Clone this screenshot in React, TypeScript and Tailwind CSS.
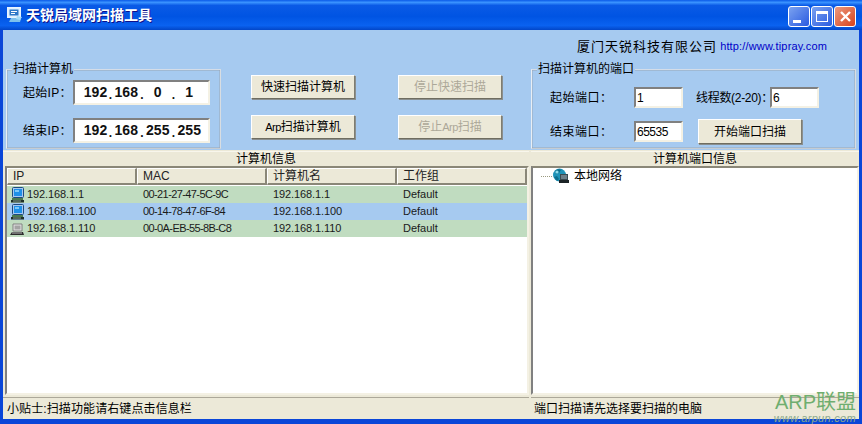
const cn = '"Liberation Sans","Noto Sans CJK SC",sans-serif';

function Pc({ gray }: { gray?: boolean }) {
  if (gray) {
    return (
      <svg width="14" height="15" viewBox="0 0 14 15">
        <path d="M3 3h9v7H3z" fill="#e4e4e4" stroke="#808080" />
        <rect x="4.5" y="4.5" width="6" height="4" fill="#a4a4a4" />
        <path d="M2 11h11l1 3H0z" fill="#2c2c2c" />
        <rect x="2" y="11.5" width="10" height="1" fill="#b8b8b8" />
      </svg>
    );
  }
  return (
    <svg width="14" height="16" viewBox="0 0 14 16">
      <rect x="2.5" y="0.5" width="11" height="10" rx="1" fill="#a8c8f0" stroke="#1d4a80" />
      <rect x="4" y="2" width="8" height="7" fill="#1e90e8" />
      <rect x="5" y="3" width="4" height="2" fill="#7cc8f8" />
      <path d="M2 11h11v2H2z" fill="#4a7a50" />
      <path d="M1 13h13v2.5H1z" fill="#20302a" />
      <rect x="3" y="13.5" width="8" height="1" fill="#88a090" />
    </svg>
  );
}

function Globe() {
  return (
    <svg width="17" height="16" viewBox="0 0 17 16">
      <circle cx="7.5" cy="7" r="6.5" fill="#1f93b8" />
      <path d="M3 3c2-2 5-2 6-1l-2 3-3 1zM2 9l3-1 2 3-2 2z" fill="#0d6f8e" />
      <circle cx="5" cy="4" r="1.6" fill="#8fdcec" />
      <path d="M8 6h8v6H8z" fill="#3a4a50" />
      <path d="M9 7h6v4H9z" fill="#6d7f88" />
      <path d="M7 12h10v3H7z" fill="#1c2326" />
    </svg>
  );
}

function AppIcon() {
  return (
    <svg width="18" height="18" viewBox="0 0 18 18">
      <rect x="1.5" y="1.5" width="13" height="10" fill="#dff0ff" stroke="#e8f4ff" />
      <rect x="3.5" y="3.5" width="9" height="6" fill="#2e78c8" />
      <path d="M5 5h6v1H5zM5 7h4v1H5z" fill="#ffffff" />
      <path d="M5 12h7l3 1-1 3H3z" fill="#7cc0ec" />
      <path d="M11 10l5 1-2 3-4-1z" fill="#a8dcf8" />
    </svg>
  );
}

function Btn({ label, disabled, h = 'h-[24px]' }: { label: React.ReactNode; disabled?: boolean; h?: string }) {
  return (
    <div
      className={`w-[104px] ${h} flex shrink-0 items-center justify-center whitespace-nowrap border border-t-white border-l-white border-r-[#7f7d70] border-b-[#6f6d60] bg-[#ece9d8] text-[12px] shadow-[1px_1px_0_#8a8f8f] ${disabled ? 'text-[#aca899]' : 'text-black'}`}
    >
      {label}
    </div>
  );
}

function Sunken({ className, children }: { className: string; children: React.ReactNode }) {
  return (
    <div className={`${className} flex shrink-0 items-center border-2 border-t-[#808080] border-l-[#808080] border-r-[#f4f1e4] border-b-[#f4f1e4] bg-white`}>
      {children}
    </div>
  );
}

function IpBox({ parts }: { parts: string[] }) {
  return (
    <Sunken className="h-[25px] w-[137px] pl-[8px] pr-[2px] text-[14px] font-bold text-[#111]">
      {parts.map((p, i) => (
        <div key={i} className="flex items-center">
          <span className={`text-center ${i === 0 ? 'w-[25px]' : 'w-[26.5px]'}`}>{p}</span>
          {i < 3 && <span className="w-[5px] translate-y-[2px] text-center text-[12px]">.</span>}
        </div>
      ))}
    </Sunken>
  );
}

function Group({ label, className, children }: { label: string; className: string; children: React.ReactNode }) {
  return (
    <div className={`${className} relative shrink-0 border border-t-[#d5dde8] border-l-[#e8eef5] border-r-[#d8dde2] border-b-[#c6ccd2] shadow-[inset_0_0_0_0.5px_#9aa7b5]`}>
      <span className="absolute left-[5px] top-[-7px] whitespace-nowrap bg-[#a6caf0] px-[1px] text-[12px] leading-[13px] text-black">{label}</span>
      {children}
    </div>
  );
}

const rows = [
  { ip: '192.168.1.1', mac: '00-21-27-47-5C-9C', bg: 'bg-[#c0dcc0]' },
  { ip: '192.168.1.100', mac: '00-14-78-47-6F-84', bg: 'bg-[#a6caf0]' },
  { ip: '192.168.1.110', mac: '00-0A-EB-55-8B-C8', bg: 'bg-[#c0dcc0]', gray: true },
];

function Head({ label }: { label: string }) {
  return (
    <div className="flex h-[17px] w-[130px] shrink-0 items-center border-r-2 border-b-2 border-r-[#8a8778] border-b-[#8a8778] border-t border-l border-t-white border-l-white bg-[#ece9d8] pl-[5px] text-[12px] text-[#222]">
      {label}
    </div>
  );
}

export default function App() {
  return (
    <div className="relative h-[424px] w-[862px] overflow-hidden bg-[#0a46d8] text-[12px] text-black" style={{ fontFamily: cn }}>
      {/* Title bar */}
      <div className="flex h-[30px] items-center bg-[linear-gradient(180deg,#0a5ae8_0%,#3a93ff_8%,#0a5ae6_18%,#0054e3_55%,#0a62f0_85%,#0246c8_100%)] pl-[6px] pr-[6px]">
        <AppIcon />
        <span className="ml-[2px] text-[14px] font-bold text-white [text-shadow:1px_1px_0_#0f1089]">天锐局域网扫描工具</span>
        <div className="ml-auto mt-[3px] flex gap-[1px]">
          <div className="flex h-[21px] w-[22px] items-end justify-start rounded-[3px] border border-white bg-[linear-gradient(135deg,#7ba2f0,#2a5be0)] pb-[3px] pl-[4px]">
            <div className="h-[3px] w-[8px] bg-white" />
          </div>
          <div className="flex h-[21px] w-[22px] items-center justify-center rounded-[3px] border border-white bg-[linear-gradient(135deg,#7ba2f0,#2a5be0)]">
            <div className="h-[11px] w-[12px] border border-t-[3px] border-white" />
          </div>
          <div className="flex h-[21px] w-[22px] items-center justify-center rounded-[3px] border border-white bg-[linear-gradient(135deg,#eb9a80,#d8421c)]">
            <svg width="13" height="13" viewBox="0 0 13 13">
              <path d="M2 2l9 9M11 2l-9 9" stroke="#fff" strokeWidth="2.4" />
            </svg>
          </div>
        </div>
      </div>

      {/* Client */}
      <div className="mx-[3px] flex h-[389px] flex-col">
        {/* Top */}
        <div className="flex h-[120px] flex-col bg-[#a6caf0]">
          <div className="flex h-[39px] items-start justify-end pr-[32px] pt-[8px]">
            <span className="text-[13px] leading-[17px] tracking-[1px]">厦门天锐科技有限公司</span>
            <span className="ml-[3px] text-[11px] leading-[17px] tracking-[0.15px] text-[#0000c8]">http://www.tipray.com</span>
          </div>
          <div className="flex">
            <Group label="扫描计算机" className="ml-[3px] h-[80px] w-[215px]">
              <div className="flex flex-col gap-[13px] pl-[16px] pt-[10px]">
                <div className="flex items-center">
                  <span className="w-[50px] whitespace-nowrap pt-[1px] text-[12px] tracking-[0.3px]">起始IP：</span>
                  <IpBox parts={['192', '168', '0', '1']} />
                </div>
                <div className="flex items-center">
                  <span className="w-[50px] whitespace-nowrap pt-[1px] text-[12px] tracking-[0.3px]">结束IP：</span>
                  <IpBox parts={['192', '168', '255', '255']} />
                </div>
              </div>
            </Group>
            <div className="ml-[30px] mt-[6px] grid h-[64px] w-[251px] grid-cols-[104px_104px] content-between justify-between">
              <Btn label="快速扫描计算机" />
              <Btn label="停止快速扫描" disabled />
              <Btn label={<><span className="text-[11px] tracking-[-0.5px]">Arp</span>扫描计算机</>} />
              <Btn label={<><span>停止</span><span className="text-[11px] tracking-[-0.5px]">Arp</span><span>扫描</span></>} disabled />
            </div>
            <Group label="扫描计算机的端口" className="ml-[29px] h-[80px] w-[325px]">
              <div className="flex flex-col gap-[11px] pl-[18px] pt-[17px] text-[12px] tracking-[-0.5px]">
                <div className="flex h-[21px] items-center">
                  <span className="w-[84px] whitespace-nowrap tracking-[0.5px]">起始端口：</span>
                  <Sunken className="h-[21px] w-[49px] pl-[1px]">1</Sunken>
                  <span className="ml-[13px] w-[74px] whitespace-nowrap tracking-[-0.3px]">线程数(2-20)：</span>
                  <Sunken className="h-[21px] w-[49px] pl-[1px]">6</Sunken>
                </div>
                <div className="flex h-[25px] items-center">
                  <span className="w-[84px] whitespace-nowrap tracking-[0.5px]">结束端口：</span>
                  <Sunken className="h-[21px] w-[49px] pl-[1px]">65535</Sunken>
                  <div className="ml-[15px] tracking-normal">
                    <Btn label="开始端口扫描" h="h-[25px]" />
                  </div>
                </div>
              </div>
            </Group>
          </div>
        </div>

        {/* Lower */}
        <div className="flex min-h-0 flex-1 gap-[2px] bg-[#ece9d8] pt-[1px]">
          <div className="flex w-[526px] flex-col border-t border-[#f8f6ec]">
            <div className="h-[14px] text-center text-[12px] leading-[15px]">计算机信息</div>
            <div className="ml-[2px] flex h-[232px] flex-col border-2 border-t-[#8a8778] border-l-[#808080] border-r-[#f4f1e4] border-b-[#f4f1e4] bg-white">
              <div className="flex">
                <Head label="IP" />
                <Head label="MAC" />
                <Head label="计算机名" />
                <Head label="工作组" />
              </div>
              <div className="mt-[1px]">
                {rows.map((r) => (
                  <div key={r.ip} className={`${r.bg} flex h-[17px] items-center text-[11px] text-[#1a1a1a]`}>
                    <div className="flex w-[130px] shrink-0 items-center pl-[3px]">
                      <Pc gray={r.gray} />
                      <span className="ml-[3px] tracking-[-0.1px]">{r.ip}</span>
                    </div>
                    <span className="w-[130px] shrink-0 pl-[6px] tracking-[-0.6px]">{r.mac}</span>
                    <span className="w-[130px] shrink-0 pl-[6px] tracking-[-0.1px]">{r.ip}</span>
                    <span className="pl-[6px]">Default</span>
                  </div>
                ))}
              </div>
            </div>
            <div className="mt-[2px] border-t border-[#aca899] pl-[4px] pt-[1px] text-[12px] leading-[20px] tracking-[0.1px]">小贴士:扫描功能请右键点击信息栏</div>
          </div>
          <div className="flex w-[328px] flex-col border-t border-[#f8f6ec]">
            <div className="h-[14px] text-center text-[12px] leading-[15px]">计算机端口信息</div>
            <div className="flex h-[232px] border-2 border-t-[#8a8778] border-l-[#808080] border-r-[#f4f1e4] border-b-[#f4f1e4] bg-white">
              <div className="flex h-[16px] items-center pl-[8px]">
                <div className="w-[11px] border-t border-dotted border-[#9a9a80]" />
                <Globe />
                <span className="ml-[5px] text-[12px]">本地网络</span>
              </div>
            </div>
            <div className="mt-[2px] border-t border-[#aca899] pl-[3px] pt-[1px] text-[12px] leading-[20px]">端口扫描请先选择要扫描的电脑</div>
          </div>
        </div>
      </div>

      {/* Watermark */}
      <div className="absolute right-[6px] top-[391px] flex flex-col items-end">
        <span className="text-[20px] leading-[22px] text-[#6fae6f]">ARP联盟</span>
        <span className="text-[11px] italic leading-[10px] tracking-[0.3px] text-[#8aa88a]">www.arpun.com</span>
      </div>
    </div>
  );
}
